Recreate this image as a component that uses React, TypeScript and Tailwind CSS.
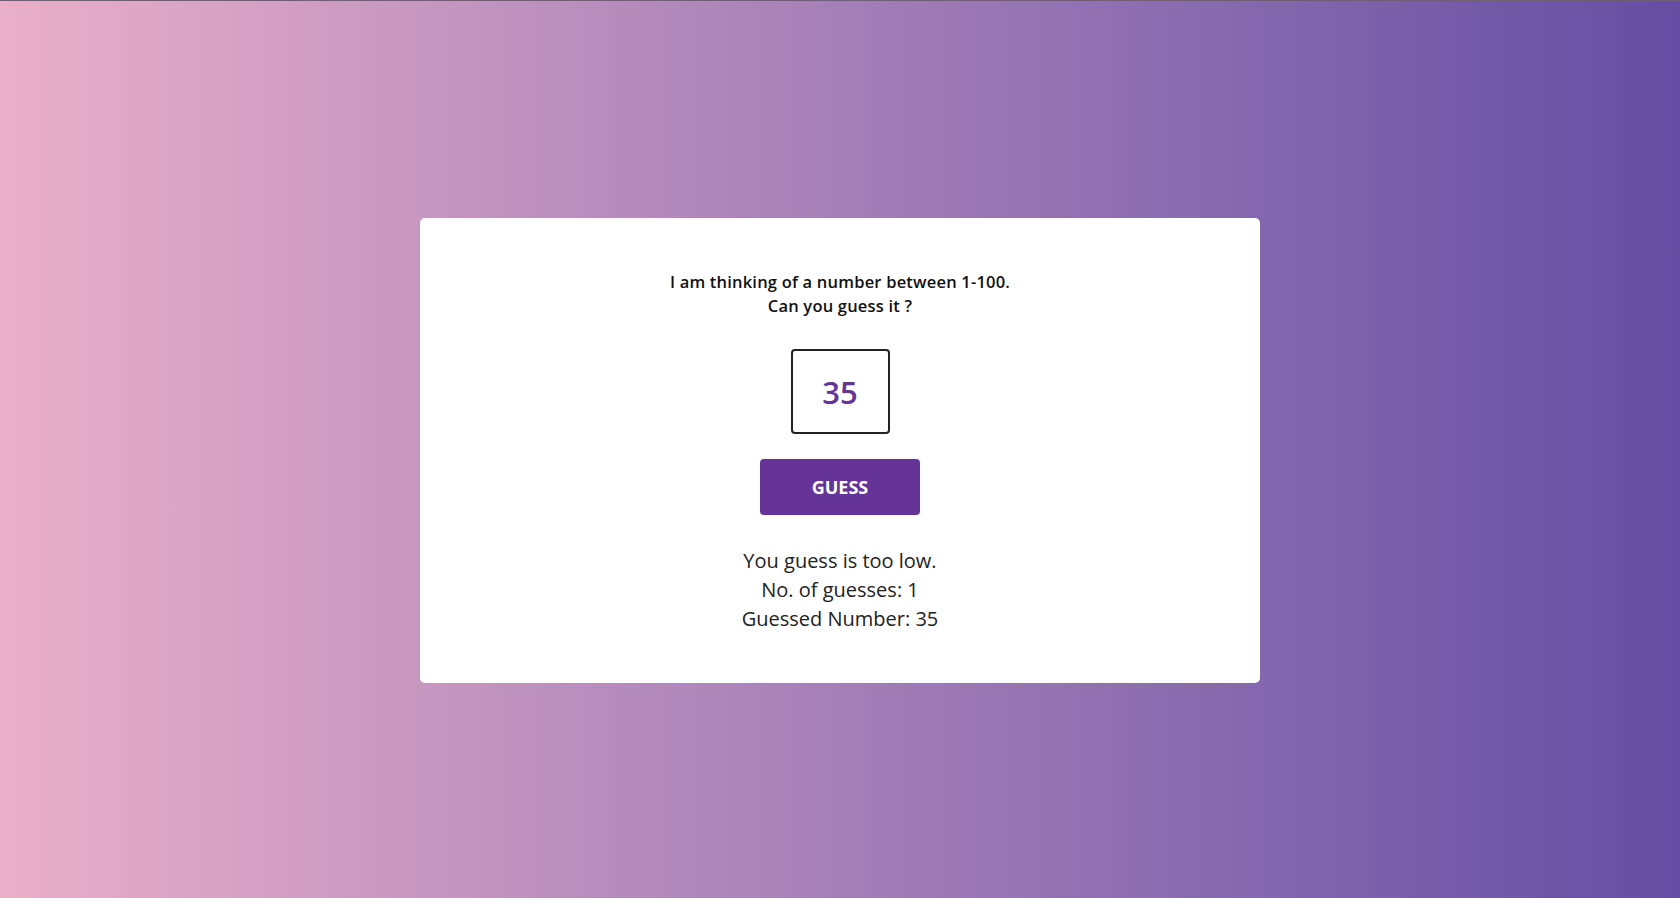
import { useState } from 'react'

const SECRET = 62

export default function App() {
  const [value, setValue] = useState('35')
  const [count, setCount] = useState(1)
  const [last, setLast] = useState(35)
  const [message, setMessage] = useState('You guess is too low.')

  function handleGuess() {
    const n = Number(value)
    if (!n) return
    setCount(count + 1)
    setLast(n)
    if (n < SECRET) setMessage('You guess is too low.')
    else if (n > SECRET) setMessage('You guess is too high.')
    else setMessage('You guessed it right!')
  }

  return (
    <div
      className="min-h-screen w-full flex items-center justify-center pt-[2px] bg-gradient-to-r from-[#eaafc8] to-[#654ea3] border-t border-[#6e5f72]"
      style={{ fontFamily: '"Open Sans", "Liberation Sans", sans-serif' }}
    >
      <div className="w-[840px] bg-white rounded-[5px] flex flex-col items-center pt-[52px] pb-[50px]">
        <p className="text-[16.5px] leading-[24px] font-semibold text-[#111] text-center tracking-[0.2px]">
          I am thinking of a number between 1-100.
          <br />
          Can you guess it ?
        </p>

        <input
          type="text"
          value={value}
          onChange={(e) => setValue(e.target.value)}
          className="mt-[31px] w-[99px] h-[85px] border-2 border-[#222] rounded-[4px] text-center text-[31px] font-semibold text-[#663399] outline-none"
        />

        <button
          onClick={handleGuess}
          className="mt-[25px] w-[160px] h-[56px] rounded-[4px] bg-[#663399] text-white text-[18px] font-bold"
        >
          GUESS
        </button>

        <div className="mt-[31px] text-[20px] leading-[29px] text-[#222] text-center">
          <p>{message}</p>
          <p>No. of guesses: {count}</p>
          <p>Guessed Number: {last}</p>
        </div>
      </div>
    </div>
  )
}
